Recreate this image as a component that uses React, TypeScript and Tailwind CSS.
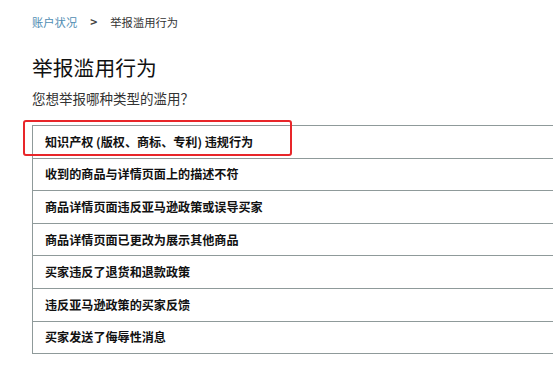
import React from "react";

const rows = [
  "知识产权 (版权、商标、专利) 违规行为",
  "收到的商品与详情页面上的描述不符",
  "商品详情页面违反亚马逊政策或误导买家",
  "商品详情页面已更改为展示其他商品",
  "买家违反了退货和退款政策",
  "违反亚马逊政策的买家反馈",
  "买家发送了侮辱性消息",
];

export default function App() {
  return (
    <div
      className="w-[553px] h-[369px] bg-white overflow-hidden pl-[32px]"
      style={{ fontFamily: '"Noto Sans CJK SC", "Noto Sans", sans-serif' }}
    >
      <div className="flex items-center h-[14px] pt-[15px] box-content text-[11.3px] leading-[14px]">
        <span className="text-[#4f8db3]">账户状况</span>
        <span className="ml-[13px] text-[#444] text-[12px] font-bold">&gt;</span>
        <span className="ml-[13px] text-[#333]">举报滥用行为</span>
      </div>
      <div className="h-[26px] mt-[25px] text-[20.8px] leading-[26px] font-normal text-[#111]">
        举报滥用行为
      </div>
      <div className="h-[18px] mt-[9px] text-[13.5px] leading-[18px] text-[#333]">
        您想举报哪种类型的滥用？
      </div>
      <div className="relative mt-[18px] border-l border-b border-[#8f9a9a]">
        {rows.map((r, i) => (
          <div
            key={i}
            className="h-[32.6px] border-t border-[#8f9a9a] flex items-center pl-[12px] text-[12.1px] font-bold text-[#111] leading-[16px]"
          >
            {r}
          </div>
        ))}
        <div className="absolute left-[-10px] top-[-5px] w-[269px] h-[36px] border-[2.5px] border-[#e8262a] rounded-[3px]" />
      </div>
    </div>
  );
}
